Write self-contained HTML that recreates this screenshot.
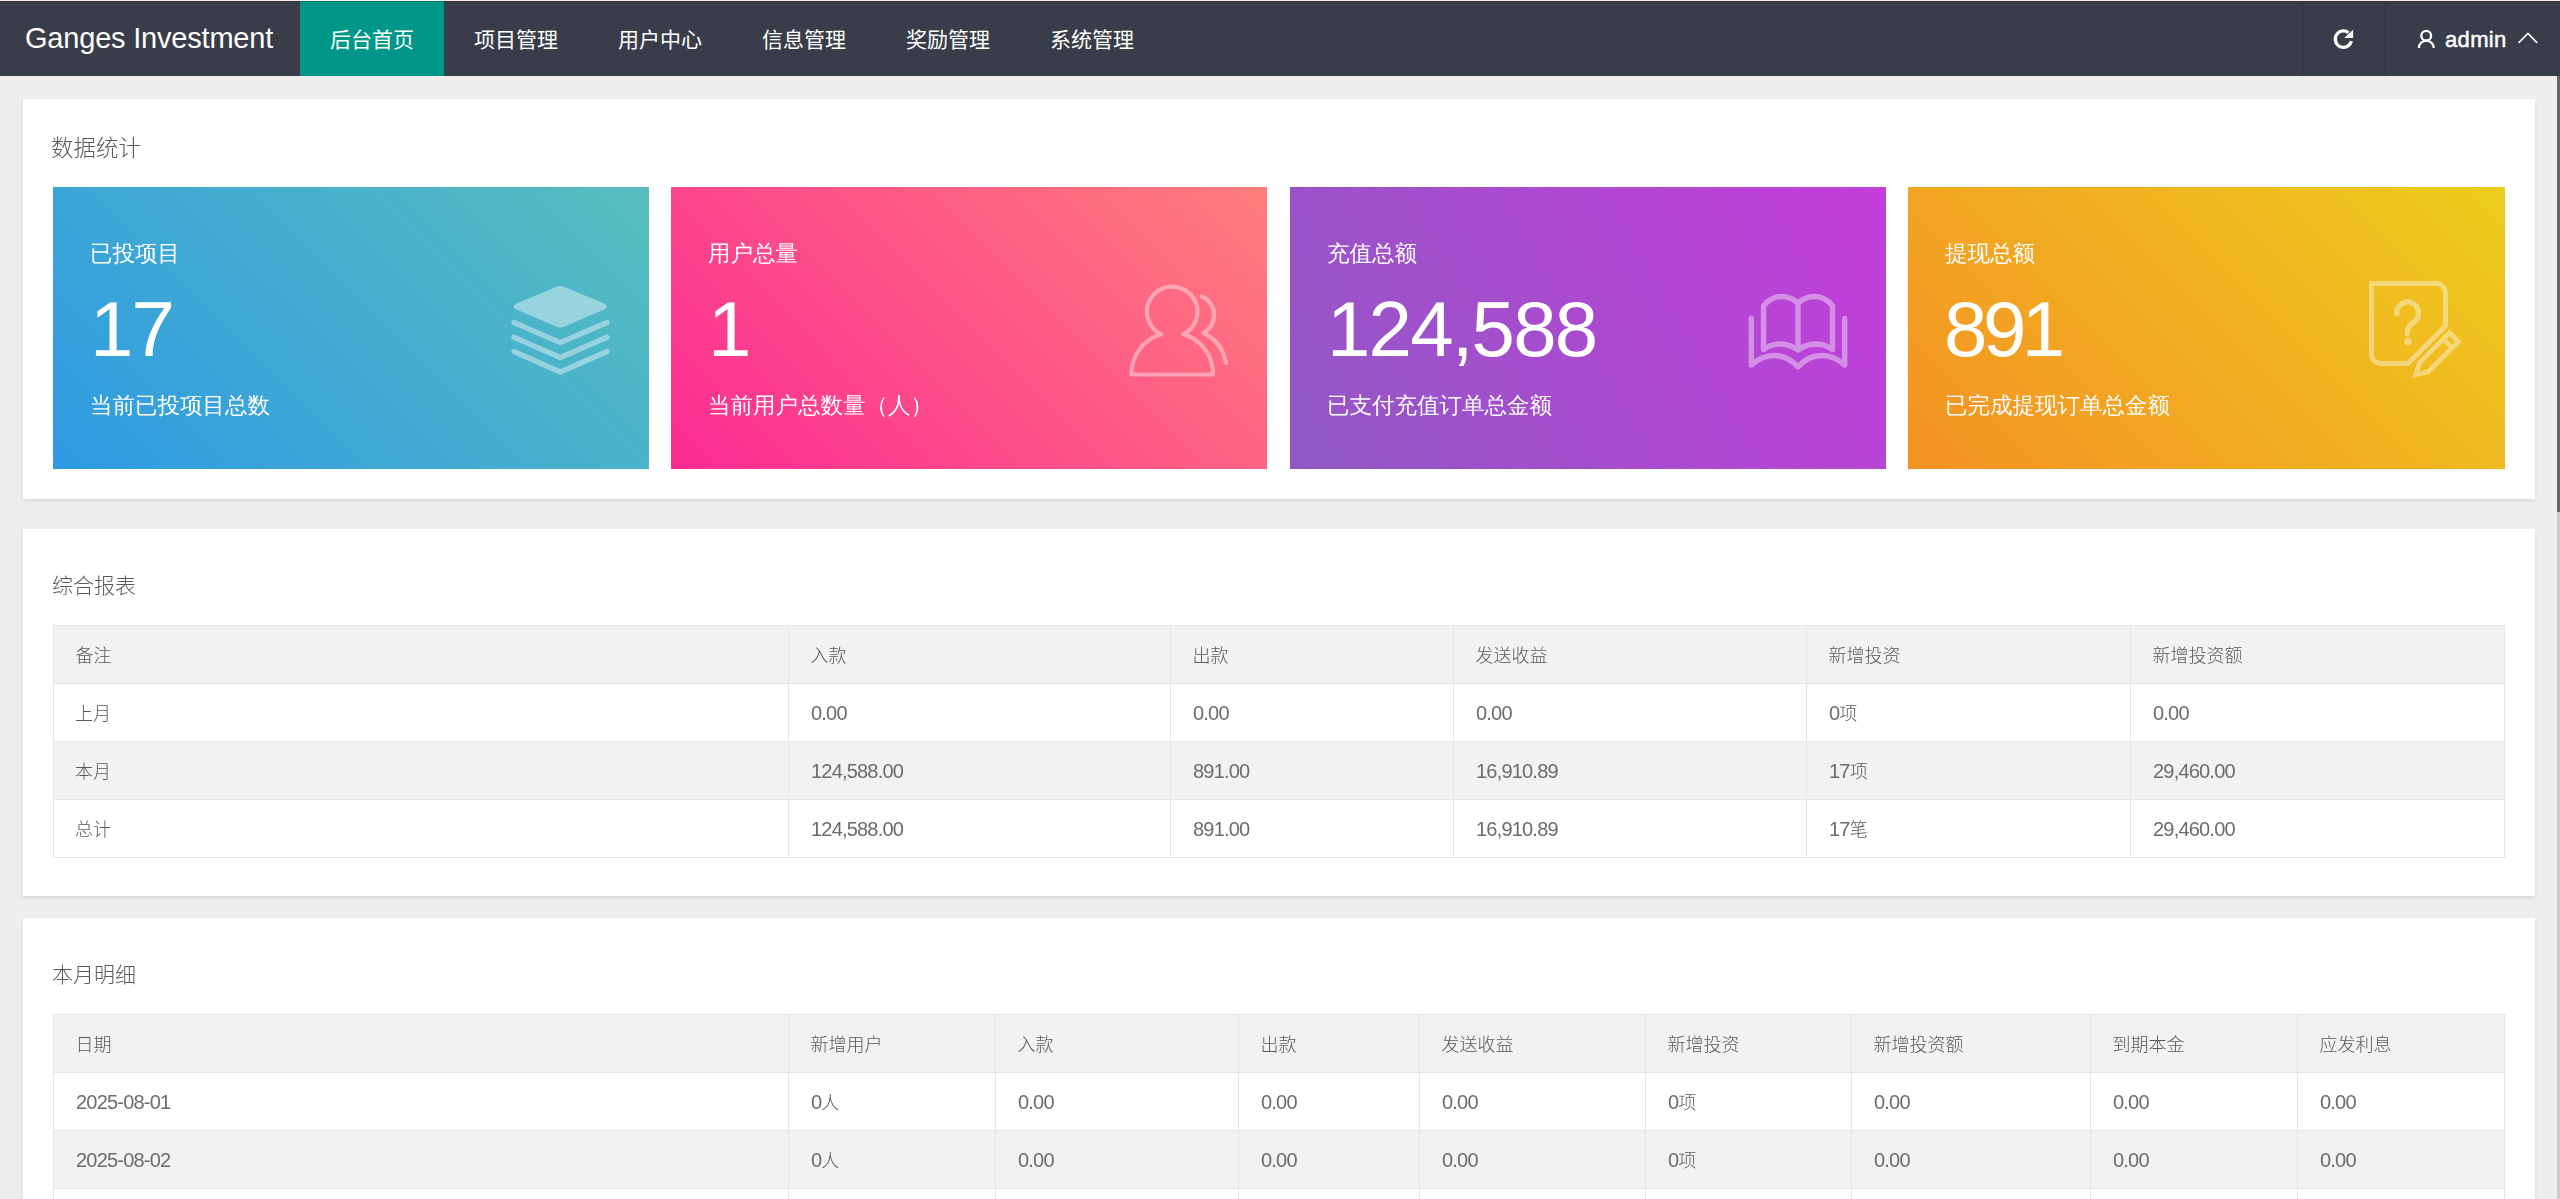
<!DOCTYPE html>
<html lang="zh-CN">
<head>
<meta charset="utf-8">
<title>Ganges Investment</title>
<style>
*{box-sizing:border-box;margin:0;padding:0}
html,body{width:2560px;height:1199px;overflow:hidden}
body{position:relative;background:#eee;font-family:"Liberation Sans","Noto Sans CJK SC",sans-serif;color:#666;-webkit-font-smoothing:antialiased}
.topline{position:absolute;left:0;top:0;width:2560px;height:2px;background:linear-gradient(#ffe9eb 0,#ffe9eb 1px,rgba(0,0,0,.18) 1px,rgba(0,0,0,.18) 2px);z-index:5}
.header{position:absolute;left:0;top:0;width:2560px;height:76px;background:#393d49;color:#fff}
.logo{position:absolute;left:25px;top:1px;height:75px;line-height:75.5px;font-size:29px;letter-spacing:-0.2px;white-space:nowrap;color:#fff}
.nav{position:absolute;left:300px;top:1px;height:75px;display:flex}
.nav a{display:block;width:144px;height:75px;line-height:77px;text-align:center;font-size:21px;color:#fff;text-decoration:none;white-space:nowrap}
.nav a.on{background:#009688}
.hr-item{position:absolute;top:1px;height:75px;border-left:1px solid #2f323c}
.hr-refresh{left:2302px;width:83px}
.hr-user{left:2385px;width:175px}
.hr-item svg{position:absolute;left:-1px;top:0}
.admin{position:absolute;left:59px;top:0;line-height:77px;font-size:22px;letter-spacing:.35px;color:#fff;white-space:nowrap;-webkit-text-stroke:.5px #fff}
.scroll-track{position:absolute;left:2557px;top:76px;width:3px;height:1123px;background:#cbcbcb}
.scroll-thumb{position:absolute;left:2557px;top:76px;width:3px;height:436px;background:#666}
.card{will-change:transform;position:absolute;left:23px;width:2512px;background:#fff;box-shadow:0 1.5px 4px 0 rgba(0,0,0,.09)}
.card h3{position:absolute;left:29px;font-weight:300;font-size:21px;line-height:30px;color:#5a5a5a;white-space:nowrap}
#c1{top:99px;height:400px}
#c2{top:529px;height:367px}
#c3{top:918px;height:400px}
.stats{position:absolute;left:30px;top:88px;width:2452px;height:282px}
.stat{position:absolute;top:0;width:596px;height:282px;color:#fff;font-family:"Liberation Sans","WenQuanYi Zen Hei","Noto Sans CJK SC",sans-serif}
.stat .lb{position:absolute;left:37px;top:52px;font-size:22.5px;line-height:30px;white-space:nowrap}
.stat .num{position:absolute;left:37px;top:99px;font-size:78px;line-height:86px;letter-spacing:-1.8px;white-space:nowrap}
.stat .ft{position:absolute;left:37px;top:204px;font-size:22.5px;line-height:30px;white-space:nowrap}
.stat svg{position:absolute;left:0;top:0;overflow:visible}
.s1{left:0}.s2{left:618px}.s3{left:1237px}.s4{left:1855px;width:597px}
.s1{background:linear-gradient(45deg,#2e9ae3 0%,#58bebe 100%)}
.s2{background:linear-gradient(45deg,#fb2b93 0%,#ff7e7c 100%)}
.s3{background:linear-gradient(60deg,#9059c4 0%,#c43ddb 100%)}
.s4 .num{letter-spacing:-4.5px;left:36px}
.s4{background:linear-gradient(45deg,#f49124 0%,#edcd1e 100%)}
table{position:absolute;left:30px;border-collapse:collapse;table-layout:fixed;width:2451px;font-size:18px;color:#666}
td,th{height:58px;border:1px solid #e6e6e6;padding:2px 0 0 22px;text-align:left;font-weight:400;line-height:30px;white-space:nowrap}
th{font-weight:300;color:#5a5a5a;padding-left:21.6px}
td{font-size:20px;letter-spacing:-.8px;color:#6c6c6c;padding-top:0}
td.c{padding-top:2px;padding-left:21px}
td.m{padding-top:2px}
td i{position:relative;top:0}
td.c,td i{font-size:18px;letter-spacing:0;font-style:normal;font-weight:300;color:#5a5a5a}
thead tr,tbody tr:nth-child(even){background:#f2f2f2}
</style>
</head>
<body>
<div class="header">
  <div class="logo">Ganges Investment</div>
  <div class="nav">
    <a class="on">后台首页</a><a>项目管理</a><a>用户中心</a><a>信息管理</a><a>奖励管理</a><a>系统管理</a>
  </div>
  <div class="hr-item hr-refresh">
    <svg width="83" height="75" viewBox="2302 1 83 75"><path d="M2351.4 41.2 A8.2 8.2 0 1 1 2348.6 32.7" fill="none" stroke="#fff" stroke-width="3.2"/><path d="M2353.1 29.8 V38 H2344.2 Z" fill="#fff"/></svg>
  </div>
  <div class="hr-item hr-user">
    <svg width="175" height="75" viewBox="2385 1 175 75"><circle cx="2426.2" cy="35.7" r="4.9" fill="none" stroke="#fff" stroke-width="2.3"/><path d="M2418.9 48 A7.4 7.4 0 0 1 2433.7 48" fill="none" stroke="#fff" stroke-width="2.3"/><path d="M2518.6 42.9 L2527.9 33.5 L2537.2 42.9" fill="none" stroke="#fff" stroke-width="1.6"/></svg>
    <span class="admin">admin</span>
  </div>
</div>
<div class="topline"></div>
<div class="scroll-track"></div>
<div class="scroll-thumb"></div>

<div class="card" id="c1">
  <h3 style="top:35px;font-size:22.5px;left:28px">数据统计</h3>
  <div class="stats">
    <div class="stat s1">
      <div class="lb">已投项目</div><div class="num">17</div><div class="ft">当前已投项目总数</div>
      <svg width="596" height="282" viewBox="53 187 596 282"><g fill="none" stroke="#fff" stroke-opacity=".42" stroke-width="5.3" stroke-linecap="round" stroke-linejoin="miter"><path d="M514 322.5 L560.3 342.7 L607 322.5"/><path d="M514 337.3 L560.3 357.5 L607 337.3"/><path d="M514 351.5 L560.3 372 L607 351.5"/></g><path d="M556 287 Q560.3 285 564.6 287 L604 303.5 Q610 306.5 604 309.5 L564.6 326.5 Q560.3 328.6 556 326.5 L516.5 309.5 Q510.5 306.5 516.5 303.5 Z" fill="#fff" fill-opacity=".42"/></svg>
    </div>
    <div class="stat s2">
      <div class="lb">用户总量</div><div class="num">1</div><div class="ft">当前用户总数量（人）</div>
      <svg width="596" height="282" viewBox="671 187 596 282"><g transform="translate(1110 270)" opacity=".4" fill="none" stroke="#fff" stroke-width="4.2" stroke-linecap="round" stroke-linejoin="round"><path d="M21.5 104.5 A41 41 0 0 1 51 64.3 A25.2 25.2 0 1 1 73.4 64.3 A41 41 0 0 1 103 104.5 Z"/><path d="M92 26.5 A20.4 20.4 0 0 1 93.5 63 A39 39 0 0 1 116 93"/></g></svg>
    </div>
    <div class="stat s3">
      <div class="lb">充值总额</div><div class="num">124,588</div><div class="ft">已支付充值订单总金额</div>
      <svg width="596" height="282" viewBox="1290 187 596 282"><g transform="translate(1730 270)" opacity=".4" fill="none" stroke="#fff" stroke-width="5.4" stroke-linecap="round" stroke-linejoin="round"><path d="M21.3 48.5 V95 C28 89 36 85.5 44 85.5 C54 85.5 62 90 68 97 C74 90 82 85.5 92 85.5 C100 85.5 108 89 114.7 95 V48.5"/><path d="M33.5 79.5 V36 C39 29 45 26.5 51 26.5 C58 26.5 64 29.5 68 33 C72 29.5 78 26.5 85 26.5 C91 26.5 97 29 102.5 36 V79.5 C97 75.5 91 74 86 74 C79 74 73 76.5 68 80 C63 76.5 57 74 50 74 C45 74 39 75.5 33.5 79.5 Z M68 33 V80"/></g></svg>
    </div>
    <div class="stat s4">
      <div class="lb">提现总额</div><div class="num">891</div><div class="ft">已完成提现订单总金额</div>
      <svg width="596" height="282" viewBox="1908 187 596 282"><g transform="translate(2350 270)" opacity=".4" fill="none" stroke="#fff" stroke-width="4.8" stroke-linejoin="miter"><path d="M21.5 13.5 H86 A9.5 9.5 0 0 1 95.5 23 V56 L58 93.5 H31 A9.5 9.5 0 0 1 21.5 84 Z"/><path d="M46.7 43.5 A10.9 10.9 0 1 1 64.5 51.5 Q57.2 56.5 57.2 63.5" stroke-width="5.4" stroke-linecap="round"/><path d="M99.5 62.7 L108.3 71.5 L78.3 101.5 L65.8 104.8 L69.5 92.7 Z M93.3 68.9 L102.1 77.7"/><circle cx="58" cy="71.5" r="3.7" fill="#fff" stroke="none"/></g></svg>
    </div>
  </div>
</div>

<div class="card" id="c2">
  <h3 style="top:42px">综合报表</h3>
  <table style="top:96px">
    <colgroup><col style="width:735px"><col style="width:382px"><col style="width:283px"><col style="width:353px"><col style="width:324px"><col style="width:374px"></colgroup>
    <thead><tr><th>备注</th><th>入款</th><th>出款</th><th>发送收益</th><th>新增投资</th><th>新增投资额</th></tr></thead>
    <tbody>
      <tr><td class="c">上月</td><td>0.00</td><td>0.00</td><td>0.00</td><td class="m">0<i>项</i></td><td>0.00</td></tr>
      <tr><td class="c">本月</td><td>124,588.00</td><td>891.00</td><td>16,910.89</td><td class="m">17<i>项</i></td><td>29,460.00</td></tr>
      <tr><td class="c">总计</td><td>124,588.00</td><td>891.00</td><td>16,910.89</td><td class="m">17<i>笔</i></td><td>29,460.00</td></tr>
    </tbody>
  </table>
</div>

<div class="card" id="c3">
  <h3 style="top:42px">本月明细</h3>
  <table style="top:96px">
    <colgroup><col style="width:735px"><col style="width:207px"><col style="width:243px"><col style="width:181px"><col style="width:226px"><col style="width:206px"><col style="width:239px"><col style="width:207px"><col style="width:207px"></colgroup>
    <thead><tr><th>日期</th><th>新增用户</th><th>入款</th><th>出款</th><th>发送收益</th><th>新增投资</th><th>新增投资额</th><th>到期本金</th><th>应发利息</th></tr></thead>
    <tbody>
      <tr><td>2025-08-01</td><td class="m">0<i>人</i></td><td>0.00</td><td>0.00</td><td>0.00</td><td class="m">0<i>项</i></td><td>0.00</td><td>0.00</td><td>0.00</td></tr>
      <tr><td>2025-08-02</td><td class="m">0<i>人</i></td><td>0.00</td><td>0.00</td><td>0.00</td><td class="m">0<i>项</i></td><td>0.00</td><td>0.00</td><td>0.00</td></tr>
      <tr><td>2025-08-03</td><td class="m">0<i>人</i></td><td>0.00</td><td>0.00</td><td>0.00</td><td class="m">0<i>项</i></td><td>0.00</td><td>0.00</td><td>0.00</td></tr>
      <tr><td>2025-08-04</td><td class="m">0<i>人</i></td><td>0.00</td><td>0.00</td><td>0.00</td><td class="m">0<i>项</i></td><td>0.00</td><td>0.00</td><td>0.00</td></tr>
    </tbody>
  </table>
</div>
</body>
</html>
